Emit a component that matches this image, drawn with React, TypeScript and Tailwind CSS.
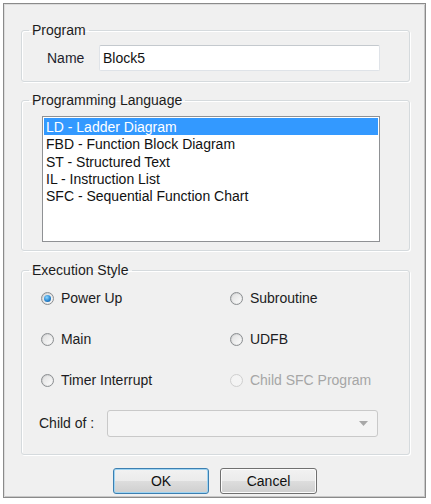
import React from "react";

const font = { fontFamily: '"Liberation Sans", Arial, sans-serif' };

function Radio({ checked, disabled, label }: { checked?: boolean; disabled?: boolean; label: string }) {
  return (
    <div className="flex items-center h-[41px]">
      <div
        className={
          "w-[13px] h-[13px] rounded-full border flex items-center justify-center " +
          (disabled
            ? "border-[#cfcfcf] bg-[#f3f3f3]"
            : "border-[#8b8e91] bg-[linear-gradient(135deg,#c9cacb,#f7f7f7)]")
        }
      >
        <div
          className={
            "w-[9px] h-[9px] rounded-full flex items-center justify-center " +
            (disabled ? "bg-[#f4f4f4]" : "bg-[linear-gradient(135deg,#e0e0e0,#fbfbfb)]")
          }
        >
          {checked && (
            <div className="w-[7px] h-[7px] rounded-full bg-[radial-gradient(circle_at_40%_35%,#8fd8ff,#2a86d0_55%,#0e4d8a)]" />
          )}
        </div>
      </div>
      <span className={"ml-[2px] pl-[1px] text-[14px] " + (disabled ? "text-[#a6a6a6]" : "text-[#1c1c22]")}>
        {"\u00a0"}{label}
      </span>
    </div>
  );
}

function Group({ title, className, children }: { title: string; className?: string; children: React.ReactNode }) {
  return (
    <fieldset
      className={
        "w-[389px] border border-[#d5dadd] rounded-[3px] shadow-[inset_1px_1px_0_#ffffff,1px_1px_0_#ffffff] " +
        (className || "")
      }
    >
      <legend className="ml-[7px] px-[3px] text-[14px] leading-[16px] text-[#1c1c1c]">{title}</legend>
      {children}
    </fieldset>
  );
}

export default function App() {
  const items = [
    "LD - Ladder Diagram",
    "FBD - Function Block Diagram",
    "ST - Structured Text",
    "IL - Instruction List",
    "SFC - Sequential Function Chart",
  ];
  return (
    <div className="w-[431px] h-[504px] bg-white pt-[3px] pl-[3px]" style={font}>
      <div className="w-[423px] h-[495px] border border-[#8a8a8a] bg-[#f0f0f0] shadow-[inset_1px_1px_0_#dcdcdc,inset_-1px_-1px_0_#c8c8c8] pl-[17px] pt-[18px]">
        <Group title="Program" className="pb-[10px]">
          <div className="flex items-center pt-[7px]">
            <span className="w-[77px] pl-[25px] text-[14px] text-[#231f2e]">Name</span>
            <div className="w-[281px] h-[26px] rounded-[2px] border border-[#dfe3e8] border-t-[#c4c9ce] bg-white flex items-center pl-[3px] text-[14px] text-[#111]">
              Block5
            </div>
          </div>
        </Group>

        <Group title="Programming Language" className="mt-[10px] pb-[8px]">
          <div className="pt-[8px] pl-[20px]">
            <div className="w-[338px] h-[126px] border border-[#8f9194] bg-white p-[1px]">
              {items.map((t, i) => (
                <div
                  key={t}
                  className={
                    "h-[17.3px] leading-[18px] pl-[2px] text-[14px] whitespace-nowrap " +
                    (i === 0 ? "bg-[#3399ff] text-white" : "text-[#111]")
                  }
                >
                  {t}
                </div>
              ))}
            </div>
          </div>
        </Group>

        <Group title="Execution Style" className="mt-[11px] pb-[17px]">
          <div className="grid grid-cols-[189px_1fr] pl-[19px]">
            <Radio checked label="Power Up" />
            <Radio label="Subroutine" />
            <Radio label="Main" />
            <Radio label="UDFB" />
            <Radio label="Timer Interrupt" />
            <Radio disabled label="Child SFC Program" />
          </div>
          <div className="flex items-center mt-[9px] pl-[17px]">
            <span className="w-[68px] text-[14px] text-[#1c1c22]">Child of :</span>
            <div className="w-[271px] h-[27px] rounded-[3px] border border-[#c9c9c9] bg-[#f4f4f4] flex items-center justify-end pr-[9px]">
              <svg width="9" height="5" viewBox="0 0 9 5">
                <path d="M0 0 L9 0 L4.5 5 Z" fill="#a8a8a8" />
              </svg>
            </div>
          </div>
        </Group>

        <div className="w-[389px] flex justify-center gap-[11px] mt-[13px] pr-[1px]">
          <button className="w-[96px] h-[26px] rounded-[3px] border border-[#3c7fb1] shadow-[inset_0_0_0_1px_#9fd4f2] bg-[linear-gradient(#f2f2f2_0%,#ebebeb_50%,#dddddd_51%,#cfcfcf_100%)] text-[14px] text-[#111]">
            OK
          </button>
          <button className="w-[97px] h-[26px] rounded-[3px] border border-[#707070] shadow-[inset_0_0_0_1px_#fcfcfc] bg-[linear-gradient(#f2f2f2_0%,#ebebeb_50%,#dddddd_51%,#cfcfcf_100%)] text-[14px] text-[#111]">
            Cancel
          </button>
        </div>
      </div>
    </div>
  );
}
